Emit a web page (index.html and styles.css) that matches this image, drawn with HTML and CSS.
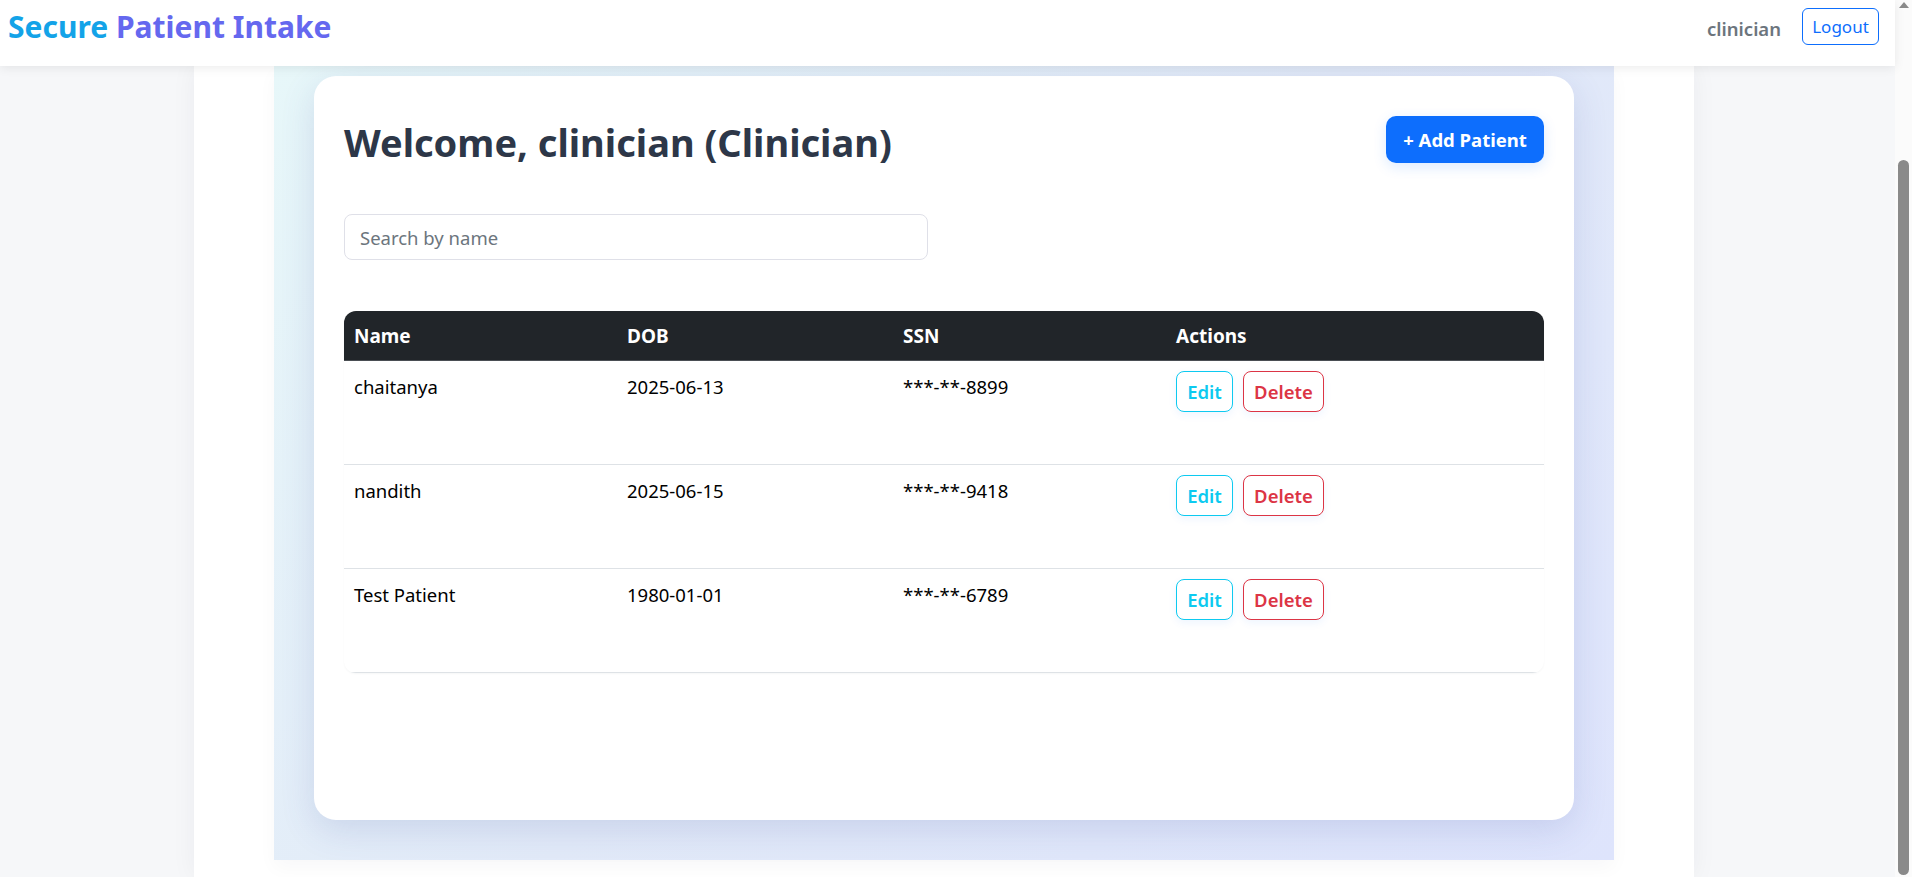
FILE: index.html
```html
<!DOCTYPE html>
<html lang="en">
<head>
<meta charset="utf-8">
<title>Secure Patient Intake</title>
<link rel="stylesheet" href="styles.css">
</head>
<body>
<div class="viewport">
  <header class="navbar">
    <div class="brand"><span class="brand-a">Secure</span> <span class="brand-b">Patient Intake</span></div>
    <div class="nav-right">
      <span class="user">clinician</span>
      <button class="btn btn-logout">Logout</button>
    </div>
  </header>
  <div class="page">
    <main class="shell">
      <section class="backdrop">
        <div class="card">
          <div class="card-head">
            <h2 class="title">Welcome, clinician (Clinician)</h2>
            <button class="btn btn-add">+ Add Patient</button>
          </div>
          <input class="search" type="text" placeholder="Search by name">
          <div class="table-wrap">
            <table class="patients">
              <thead>
                <tr>
                  <th class="col-name">Name</th>
                  <th class="col-dob">DOB</th>
                  <th class="col-ssn">SSN</th>
                  <th class="col-actions">Actions</th>
                </tr>
              </thead>
              <tbody>
                <tr>
                  <td>chaitanya</td>
                  <td>2025-06-13</td>
                  <td>***-**-8899</td>
                  <td><div class="actions"><button class="btn btn-edit">Edit</button><button class="btn btn-delete">Delete</button></div></td>
                </tr>
                <tr>
                  <td>nandith</td>
                  <td>2025-06-15</td>
                  <td>***-**-9418</td>
                  <td><div class="actions"><button class="btn btn-edit">Edit</button><button class="btn btn-delete">Delete</button></div></td>
                </tr>
                <tr>
                  <td>Test Patient</td>
                  <td>1980-01-01</td>
                  <td>***-**-6789</td>
                  <td><div class="actions"><button class="btn btn-edit">Edit</button><button class="btn btn-delete">Delete</button></div></td>
                </tr>
              </tbody>
            </table>
          </div>
        </div>
      </section>
    </main>
  </div>
</div>
<div class="scrollbar">
  <div class="scroll-arrow"></div>
  <div class="scroll-thumb"></div>
</div>
</body>
</html>
```
FILE: styles.css
```css
* { box-sizing: border-box; }

html, body {
  margin: 0;
  height: 100%;
}

body {
  display: flex;
  height: 100vh;
  overflow: hidden;
  background: #f6f7f9;
  font-family: "Noto Sans", "Open Sans", sans-serif;
  font-size: 18.5px;
  color: #212529;
}

.viewport {
  flex: 1;
  min-width: 0;
  display: flex;
  flex-direction: column;
}

/* ---------- navbar ---------- */
.navbar {
  flex: none;
  height: 66px;
  display: flex;
  align-items: flex-start;
  justify-content: space-between;
  padding: 8px 16px 0 8px;
  background: #ffffff;
  box-shadow: 0 2px 10px rgba(0, 0, 0, 0.08);
  position: relative;
  z-index: 2;
}

.brand {
  font-size: 30px;
  font-weight: 700;
  line-height: 38px;
  white-space: nowrap;
}
.brand-a { color: #13a3e8; }
.brand-b { color: #6568ef; }

.nav-right {
  display: flex;
  align-items: center;
  gap: 21px;
  height: 37px;
}

.user {
  color: #6c757d;
  font-weight: 600;
  font-size: 18.5px;
  padding-top: 3px;
}

.btn {
  font-family: inherit;
  cursor: pointer;
  background: #ffffff;
  display: inline-flex;
  align-items: center;
  justify-content: center;
  padding: 0;
}

.btn-logout {
  width: 77px;
  height: 37px;
  border: 1px solid #0d6efd;
  border-radius: 6px;
  color: #0d6efd;
  font-size: 17px;
}

/* ---------- page shell ---------- */
.page {
  flex: 1;
  display: flex;
  min-height: 0;
}

.shell {
  width: 1500px;
  margin-left: 194px;
  background: #ffffff;
  box-shadow: 0 0 24px rgba(30, 40, 60, 0.05);
  display: flex;
  justify-content: center;
  align-items: flex-start;
}

.backdrop {
  width: 1340px;
  padding: 10px 40px 40px;
  background: linear-gradient(135deg, #e7f7f9 0%, #e2eaf8 50%, #dee4fc 100%);
  box-shadow: 0 8px 18px rgba(30, 40, 60, 0.03);
}

.card {
  background: #ffffff;
  border-radius: 22px;
  padding: 40px 30px 147px;
  box-shadow: 0 10px 34px rgba(70, 90, 170, 0.16);
}

.card-head {
  display: flex;
  justify-content: space-between;
  align-items: flex-start;
  margin-bottom: 46px;
}

.title {
  margin: 0;
  font-size: 38px;
  line-height: 52px;
  font-weight: 700;
  color: #2d3748;
}

.btn-add {
  width: 158px;
  height: 47px;
  border: none;
  border-radius: 10px;
  background: #0d6efd;
  color: #ffffff;
  font-size: 18.5px;
  font-weight: 700;
  box-shadow: 0 4px 14px rgba(13, 110, 253, 0.14);
}

.search {
  display: block;
  width: 584px;
  height: 46px;
  padding: 0 15px;
  border: 1px solid #dfe0e8;
  border-radius: 8px;
  font-family: inherit;
  font-size: 18.5px;
  color: #212529;
  outline: none;
}
.search::placeholder { color: #6c757d; }

/* ---------- table ---------- */
.table-wrap {
  margin-top: 51px;
  border-radius: 12px;
  overflow: hidden;
  box-shadow: 0 1px 2px rgba(30, 40, 60, 0.04);
}

.patients {
  width: 100%;
  table-layout: fixed;
  border-collapse: separate;
  border-spacing: 0;
}

.patients th {
  background: #212529;
  color: #ffffff;
  font-weight: 700;
  font-size: 19px;
  text-align: left;
  line-height: 31px;
  padding: 10px 10px 8px;
  border-bottom: 1px solid #4a4e53;
}

.col-name { width: 273px; }
.col-dob { width: 276px; }
.col-ssn { width: 273px; }

.patients td {
  height: 104px;
  padding: 10px;
  vertical-align: top;
  line-height: 32px;
  border-bottom: 1px solid #dee2e6;
  color: #000000;
}

.actions {
  display: flex;
  gap: 10px;
}

.btn-edit,
.btn-delete {
  height: 41px;
  border-radius: 8px;
  font-size: 18.5px;
  font-weight: 600;
  box-shadow: 0 3px 8px rgba(13, 110, 253, 0.07);
}

.btn-edit {
  width: 57px;
  border: 1px solid #0dcaf0;
  color: #0dcaf0;
}

.btn-delete {
  width: 81px;
  border: 1px solid #dc3545;
  color: #dc3545;
}

/* ---------- fake window scrollbar ---------- */
.scrollbar {
  flex: none;
  width: 17px;
  background: #fbfbfb;
  display: flex;
  flex-direction: column;
  align-items: center;
}

.scroll-arrow {
  width: 0;
  height: 0;
  margin-top: 2px;
  border-left: 5px solid transparent;
  border-right: 5px solid transparent;
  border-bottom: 6px solid #8a8a8a;
}

.scroll-thumb {
  width: 11px;
  flex: 1;
  margin: 152px 0 2px;
  background: #8a8a8a;
  border-radius: 6px;
}
```
